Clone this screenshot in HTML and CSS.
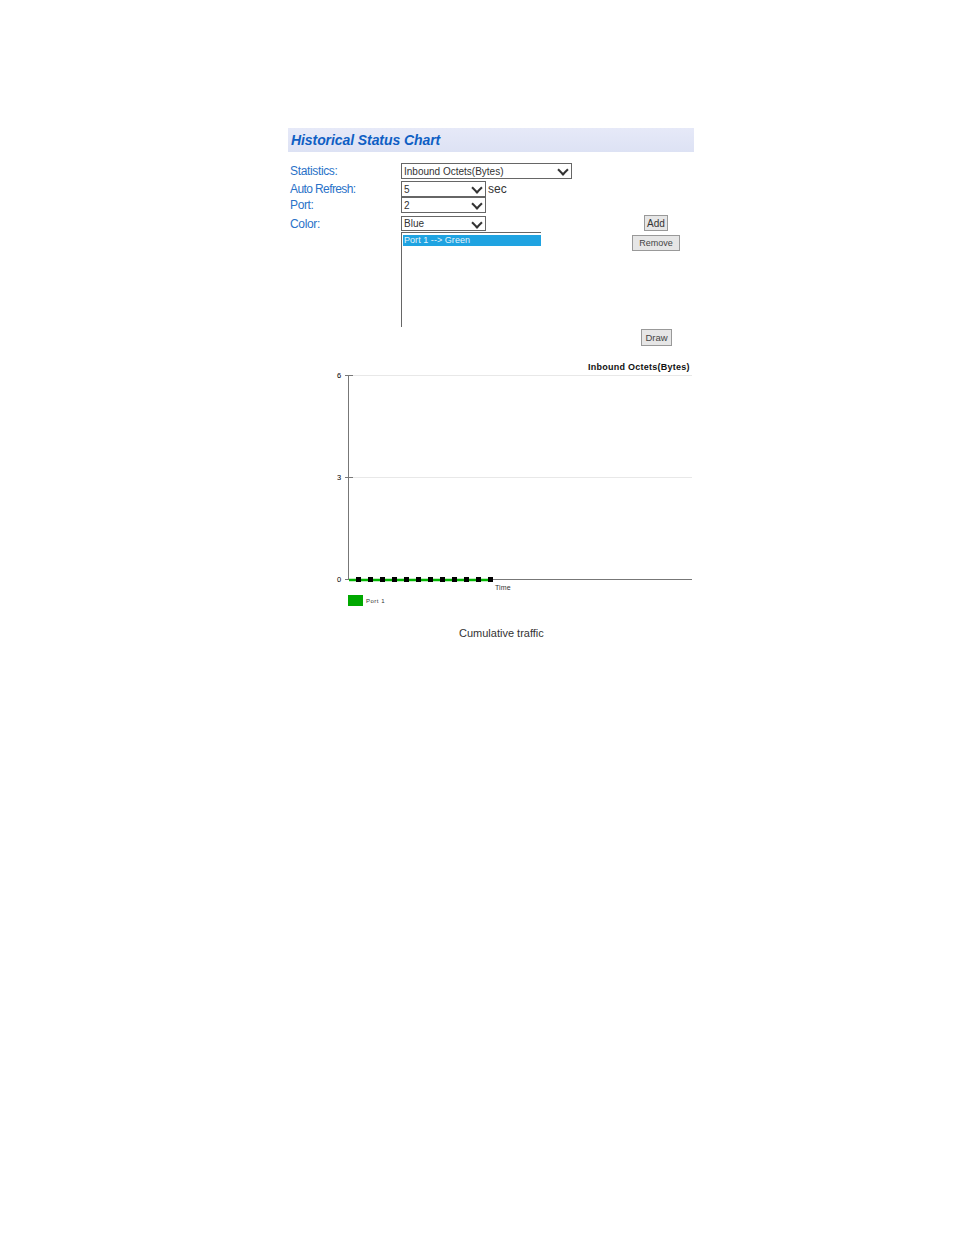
FILE: index.html
```html
<!DOCTYPE html>
<html lang="en">
<head>
    <meta charset="UTF-8">
    <title>Historical Status Chart</title>
    <link rel="stylesheet" href="styles.css">
</head>
<body>
    <div class="panel">
        <h1 class="panel-title">Historical Status Chart</h1>

        <form class="chart-form">
            <div class="row row-stats">
                <label class="row-label" for="statistics">Statistics:</label>
                <span class="sel-wrap">
                    <select id="statistics" class="sel sel-wide">
                        <option>Inbound Octets(Bytes)</option>
                    </select>
                </span>
            </div>
            <div class="row">
                <label class="row-label row-label-tight" for="refresh">Auto Refresh:</label>
                <span class="sel-wrap">
                    <select id="refresh" class="sel">
                        <option>5</option>
                    </select>
                </span>
                <span class="unit">sec</span>
            </div>
            <div class="row row-port">
                <label class="row-label" for="port">Port:</label>
                <span class="sel-wrap">
                    <select id="port" class="sel">
                        <option>2</option>
                    </select>
                </span>
            </div>

            <div class="color-block">
                <div class="color-left">
                    <div class="row row-color">
                        <label class="row-label" for="color">Color:</label>
                        <span class="sel-wrap">
                            <select id="color" class="sel">
                                <option>Blue</option>
                            </select>
                        </span>
                    </div>
                    <div class="port-list">
                        <div class="port-item">Port 1 --&gt; Green</div>
                    </div>
                </div>
                <div class="color-right">
                    <button type="button" class="btn btn-add">Add</button>
                    <button type="button" class="btn btn-remove">Remove</button>
                </div>
            </div>

            <div class="draw-row">
                <button type="button" class="btn btn-draw">Draw</button>
            </div>
        </form>

        <!-- Chart -->
        <svg class="chart" width="364" height="252" viewBox="330 360 364 252">
            <g class="grid">
                <line x1="353" y1="375.5" x2="692" y2="375.5"/>
                <line x1="353" y1="477.5" x2="692" y2="477.5"/>
            </g>
            <g class="axis">
                <line x1="348.5" y1="375" x2="348.5" y2="580"/>
                <line x1="345" y1="579.5" x2="692" y2="579.5"/>
                <line x1="345" y1="375.5" x2="353" y2="375.5"/>
                <line x1="345" y1="477.5" x2="353" y2="477.5"/>
            </g>
            <text class="tick" x="337" y="378">6</text>
            <text class="tick" x="337" y="480">3</text>
            <text class="tick" x="337" y="582">0</text>

            <line class="series" x1="349" y1="580" x2="490" y2="580"/>
            <g class="marks">
                <rect x="356" y="577" width="5" height="5"/>
                <rect x="368" y="577" width="5" height="5"/>
                <rect x="380" y="577" width="5" height="5"/>
                <rect x="392" y="577" width="5" height="5"/>
                <rect x="404" y="577" width="5" height="5"/>
                <rect x="416" y="577" width="5" height="5"/>
                <rect x="428" y="577" width="5" height="5"/>
                <rect x="440" y="577" width="5" height="5"/>
                <rect x="452" y="577" width="5" height="5"/>
                <rect x="464" y="577" width="5" height="5"/>
                <rect x="476" y="577" width="5" height="5"/>
                <rect x="488" y="577" width="5" height="5"/>
            </g>

            <text class="chart-title" x="588" y="370">Inbound Octets(Bytes)</text>
            <text class="axis-name" x="495" y="590">Time</text>
            <rect class="legend-swatch" x="348" y="595" width="15" height="11"/>
            <text class="legend-text" x="366" y="603">Port 1</text>
        </svg>

        <p class="caption">Cumulative traffic</p>
    </div>
</body>
</html>
```

FILE: styles.css
```css
* { box-sizing: border-box; margin: 0; padding: 0; }
body {
    background: #fff;
    font-family: "Liberation Sans", Arial, sans-serif;
}

.panel {
    width: 406px;
    margin: 128px 0 0 288px;
}

.panel-title {
    height: 24px;
    padding-left: 3px;
    font-size: 14px;
    line-height: 24px;
    font-style: italic;
    font-weight: bold;
    letter-spacing: -0.08px;
    color: #0f5fc4;
    background: linear-gradient(#e6e9f8, #dde2f4);
}

.chart-form { padding-top: 11px; }

.row {
    display: flex;
    align-items: center;
    height: 16px;
}
.row-stats { margin-bottom: 2px; }
.row-port { margin-bottom: 3px; }
.row-color { height: 15px; }

.row-label {
    width: 113px;
    padding-left: 2px;
    font-size: 12px;
    letter-spacing: -0.35px;
    color: #2a72c8;
}
.row-label-tight { letter-spacing: -0.6px; }

/* chevron is drawn over the select so it sits where the original does */
.sel-wrap {
    position: relative;
    display: flex;
}
.sel-wrap::after {
    content: "";
    position: absolute;
    top: 3px;
    right: 5px;
    width: 6px;
    height: 6px;
    border-right: 2px solid #333;
    border-bottom: 2px solid #333;
    transform: rotate(45deg);
    pointer-events: none;
}

.sel {
    appearance: none;
    width: 85px;
    height: 16px;
    padding: 0 0 0 2px;
    font-family: "Liberation Sans", Arial, sans-serif;
    font-size: 10px;
    color: #333;
    background: #fff;
    border: 1px solid #666;
    border-radius: 0;
}
.sel-wide { width: 171px; }
.row-color .sel { height: 15px; }

.unit {
    margin-left: 2px;
    font-size: 12px;
    color: #333;
}

.color-block { display: flex; }
.color-left { width: 344px; }

.port-list {
    width: 140px;
    height: 95px;
    margin: 1px 0 0 113px;
    padding: 2px 0 0 1px;
    border-top: 1px solid #666;
    border-left: 1px solid #666;
}
.port-item {
    width: 138px;
    height: 11px;
    padding-left: 1px;
    font-size: 9px;
    line-height: 11px;
    letter-spacing: 0.05px;
    color: #e4f3fb;
    background: #1fa3e1;
}

.color-right {
    display: flex;
    flex-direction: column;
    align-items: center;
    width: 48px;
    gap: 4px;
    margin-top: -1px;
}

.btn {
    font-family: "Liberation Sans", Arial, sans-serif;
    font-size: 9px;
    color: #444;
    background: #e6e6e6;
    border: 1px solid #999;
}
.btn-add { width: 24px; height: 16px; font-size: 10px; color: #333; }
.btn-remove { width: 48px; height: 16px; }

.draw-row {
    display: flex;
    justify-content: flex-end;
    padding: 2px 22px 0 0;
}
.btn-draw { width: 31px; height: 17px; font-size: 9.5px; }

.chart {
    display: block;
    margin: 14px 0 0 42px;
}
.grid line { stroke: #e8e8e8; stroke-width: 1; }
.axis line { stroke: #777; stroke-width: 1; }
.series { stroke: #00b400; stroke-width: 2.5; }
.marks rect { fill: #000; }
.tick, .axis-name, .legend-text, .chart-title {
    font-family: "Liberation Sans", Arial, sans-serif;
}
.tick { font-size: 7.5px; fill: #000; }
.chart-title { font-size: 9px; font-weight: bold; letter-spacing: 0.25px; fill: #111; }
.axis-name { font-size: 7px; letter-spacing: 0.1px; fill: #333; }
.legend-text { font-size: 6px; letter-spacing: 0.5px; fill: #333; }
.legend-swatch { fill: #00a800; }

.caption {
    margin: 15px 0 0 171px;
    font-size: 11px;
    color: #333;
}
```
